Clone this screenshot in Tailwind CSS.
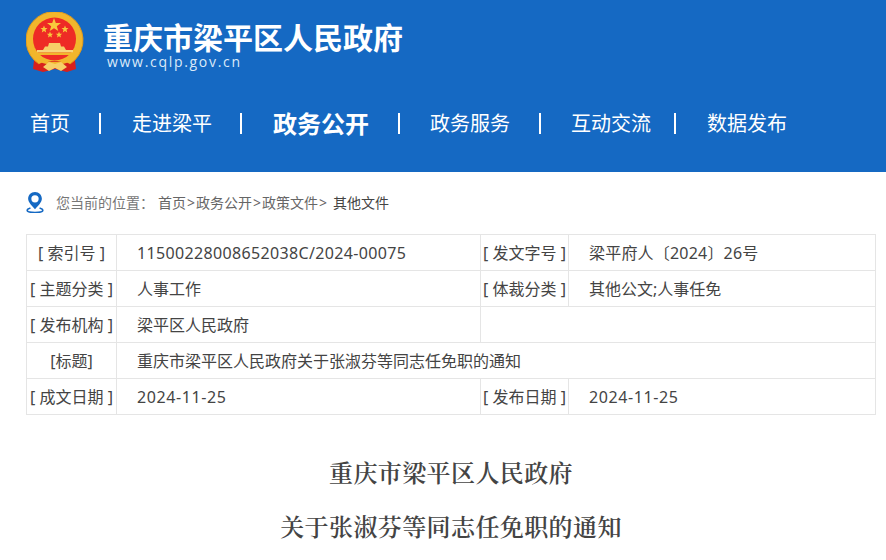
<!DOCTYPE html>
<html lang="zh-CN">
<head>
    <meta charset="UTF-8">
    <meta name="viewport" content="width=device-width, initial-scale=1.0">
    <title>重庆市梁平区人民政府</title>
    <script src="https://cdn.jsdelivr.net/npm/@tailwindcss/browser@4"></script>
</head>
<body class="bg-white h-[560px] w-[886px] overflow-hidden font-['Noto_Sans','Noto_Sans_CJK_SC',sans-serif] text-[#333]">
    <!-- Header -->
    <header class="bg-[#1569c3] h-[172px] text-white">
        <div class="flex items-start pl-[26px] pt-[12px] h-[95px]">
            <svg class="w-[58px] h-[60px] shrink-0" viewBox="0 0 58 60">
                <!-- ribbons -->
                <path d="M9 40 L7 57 L17 60 L29 57 L41 60 L50 57 L48 40 Z" fill="#d8201c"/>
                <!-- outer ring -->
                <path d="M13 52 A28.500 28.500 0 1 1 44 52 L38 49 L19 49 Z" fill="#f2b62c"/>
                <path d="M13 52 A28.500 28.500 0 1 1 44 52" fill="none" stroke="#e09a1c" stroke-width="1"/>
                <circle cx="28.500" cy="27" r="21.500" fill="#ee2b25"/>
                <!-- stars -->
                <polygon points="28,6 29.800,11 35,11 30.800,14.200 32.300,19 28,16.200 23.700,19 25.200,14.200 21,11 26.200,11" fill="#f8c83c"/>
                <polygon points="18,13.500 19,16 21.500,16 19.500,17.800 20.200,20.500 18,19 15.800,20.500 16.500,17.800 14.500,16 17,16" fill="#f8c83c"/>
                <polygon points="39,13.500 40,16 42.500,16 40.500,17.800 41.200,20.500 39,19 36.800,20.500 37.500,17.800 35.500,16 38,16" fill="#f8c83c"/>
                <polygon points="24,19.500 24.900,21.800 27.200,21.800 25.400,23.300 26,25.500 24,24.200 22,25.500 22.600,23.300 20.800,21.800 23.100,21.800" fill="#f8c83c"/>
                <polygon points="33,19.500 33.900,21.800 36.200,21.800 34.400,23.300 35,25.500 33,24.200 31,25.500 31.600,23.300 29.800,21.800 32.100,21.800" fill="#f8c83c"/>
                <!-- gate -->
                <path d="M17 38 L40 38 L38 34.500 L35 34.500 L34 31 L23 31 L22 34.500 L19 34.500 Z" fill="#f7cf68"/>
                <rect x="11" y="38" width="36" height="2.500" fill="#f7d67c"/>
                <rect x="11" y="40.500" width="36" height="2.500" fill="#f2b62c"/>
                <!-- swag and rosette -->
                <path d="M9 43 C17 52 40 52 48 43 L49 46 C41 55 16 55 8 46 Z" fill="#f2b62c"/>
                <path d="M17 55 L23 50 L29 52 L35 50 L41 55 L35 59 L29 56 L23 59 Z" fill="#f7cf68"/>
            </svg>
            <div class="ml-[19px] pt-[5px]">
                <div class="text-[30px] leading-[38px] font-bold font-['Noto_Sans_CJK_SC',sans-serif]">重庆市梁平区人民政府</div>
                <div class="text-[14px] leading-[14px] ml-[4px] tracking-[1.700px] text-[#dbe9f8] font-['Open_Sans',sans-serif]">www.cqlp.gov.cn</div>
            </div>
        </div>
        <nav class="flex items-center h-[56px] pl-[30px] text-[20px] font-['Noto_Sans_CJK_SC',sans-serif]">
            <a class="w-[40px]">首页</a>
            <span class="ml-[29px] w-[2px] h-[21px] bg-white"></span>
            <a class="ml-[31px] w-[80px]">走进梁平</a>
            <span class="ml-[28px] w-[2px] h-[21px] bg-white"></span>
            <a class="ml-[31px] w-[96px] text-[24px] font-bold">政务公开</a>
            <span class="ml-[29px] w-[2px] h-[21px] bg-white"></span>
            <a class="ml-[30px] w-[80px]">政务服务</a>
            <span class="ml-[29px] w-[2px] h-[21px] bg-white"></span>
            <a class="ml-[30px] w-[80px]">互动交流</a>
            <span class="ml-[23px] w-[2px] h-[21px] bg-white"></span>
            <a class="ml-[31px] w-[80px]">数据发布</a>
        </nav>
    </header>

    <!-- Breadcrumb -->
    <div class="flex items-center h-[62px] pb-[2px] pl-[26px] text-[14px]">
        <svg class="w-[18px] h-[22px] shrink-0" viewBox="0 0 18 24">
            <path d="M9 1 C4.500 1 1.500 4.500 1.500 8.500 C1.500 12.500 6 16.500 9 20 C12 16.500 16.500 12.500 16.500 8.500 C16.500 4.500 13.500 1 9 1 Z M9 4.500 A4 4 0 1 1 9 12.500 A4 4 0 1 1 9 4.500 Z" fill="#1569c3" fill-rule="evenodd"/>
            <path d="M4 18.500 C1.500 19.300 0.500 20.200 0.500 21 C0.500 22.500 4.500 23.500 9 23.500 C13.500 23.500 17.500 22.500 17.500 21 C17.500 20.200 16.500 19.300 14 18.500" fill="none" stroke="#1569c3" stroke-width="1.800"/>
        </svg>
        <span class="ml-[12px] text-[#777] w-[102px]">您当前的位置：</span>
        <span class="text-[#666]">首页<span class="mx-[1px]">&gt;</span>政务公开<span class="mx-[1px]">&gt;</span>政策文件<span class="mx-[1px]">&gt;</span></span>
        <span class="ml-[5px] text-[#444]">其他文件</span>
    </div>

    <!-- Info table -->
    <table class="ml-[26px] w-[850px] table-fixed border-collapse text-[16px] text-[#444]">
        <colgroup>
            <col class="w-[90px]">
            <col class="w-[364px]">
            <col class="w-[88px]">
            <col>
        </colgroup>
        <tbody>
            <tr class="h-[36px]">
                <td class="border border-[#e5e5e5] text-center whitespace-nowrap">[ 索引号 ]</td>
                <td class="border border-[#e5e5e5] pl-[20px] tracking-[0.350px]">11500228008652038C/2024-00075</td>
                <td class="border border-[#e5e5e5] text-center whitespace-nowrap">[ 发文字号 ]</td>
                <td class="border border-[#e5e5e5] pl-[20px] tracking-[0.200px]">梁平府人〔2024〕26号</td>
            </tr>
            <tr class="h-[36px]">
                <td class="border border-[#e5e5e5] text-center whitespace-nowrap">[ 主题分类 ]</td>
                <td class="border border-[#e5e5e5] pl-[20px]">人事工作</td>
                <td class="border border-[#e5e5e5] text-center whitespace-nowrap">[ 体裁分类 ]</td>
                <td class="border border-[#e5e5e5] pl-[20px]">其他公文;人事任免</td>
            </tr>
            <tr class="h-[36px]">
                <td class="border border-[#e5e5e5] text-center whitespace-nowrap">[ 发布机构 ]</td>
                <td class="border border-[#e5e5e5] pl-[20px]">梁平区人民政府</td>
                <td class="border border-[#e5e5e5]" colspan="2"></td>
            </tr>
            <tr class="h-[36px]">
                <td class="border border-[#e5e5e5] text-center">[标题]</td>
                <td class="border border-[#e5e5e5] pl-[20px]" colspan="3">重庆市梁平区人民政府关于张淑芬等同志任免职的通知</td>
            </tr>
            <tr class="h-[36px]">
                <td class="border border-[#e5e5e5] text-center whitespace-nowrap">[ 成文日期 ]</td>
                <td class="border border-[#e5e5e5] pl-[20px] tracking-[0.600px]">2024-11-25</td>
                <td class="border border-[#e5e5e5] text-center whitespace-nowrap">[ 发布日期 ]</td>
                <td class="border border-[#e5e5e5] pl-[20px] tracking-[0.600px]">2024-11-25</td>
            </tr>
        </tbody>
    </table>

    <!-- Document title -->
    <div class="pl-[26px] w-[876px] text-center text-[24px] tracking-[0.400px] text-[#444] font-['Noto_Serif_CJK_SC','Liberation_Serif',serif]">
        <h1 class="mt-[39px] leading-[36px] font-semibold">重庆市梁平区人民政府</h1>
        <h2 class="mt-[18px] leading-[36px] font-semibold">关于张淑芬等同志任免职的通知</h2>
    </div>
</body>
</html>
